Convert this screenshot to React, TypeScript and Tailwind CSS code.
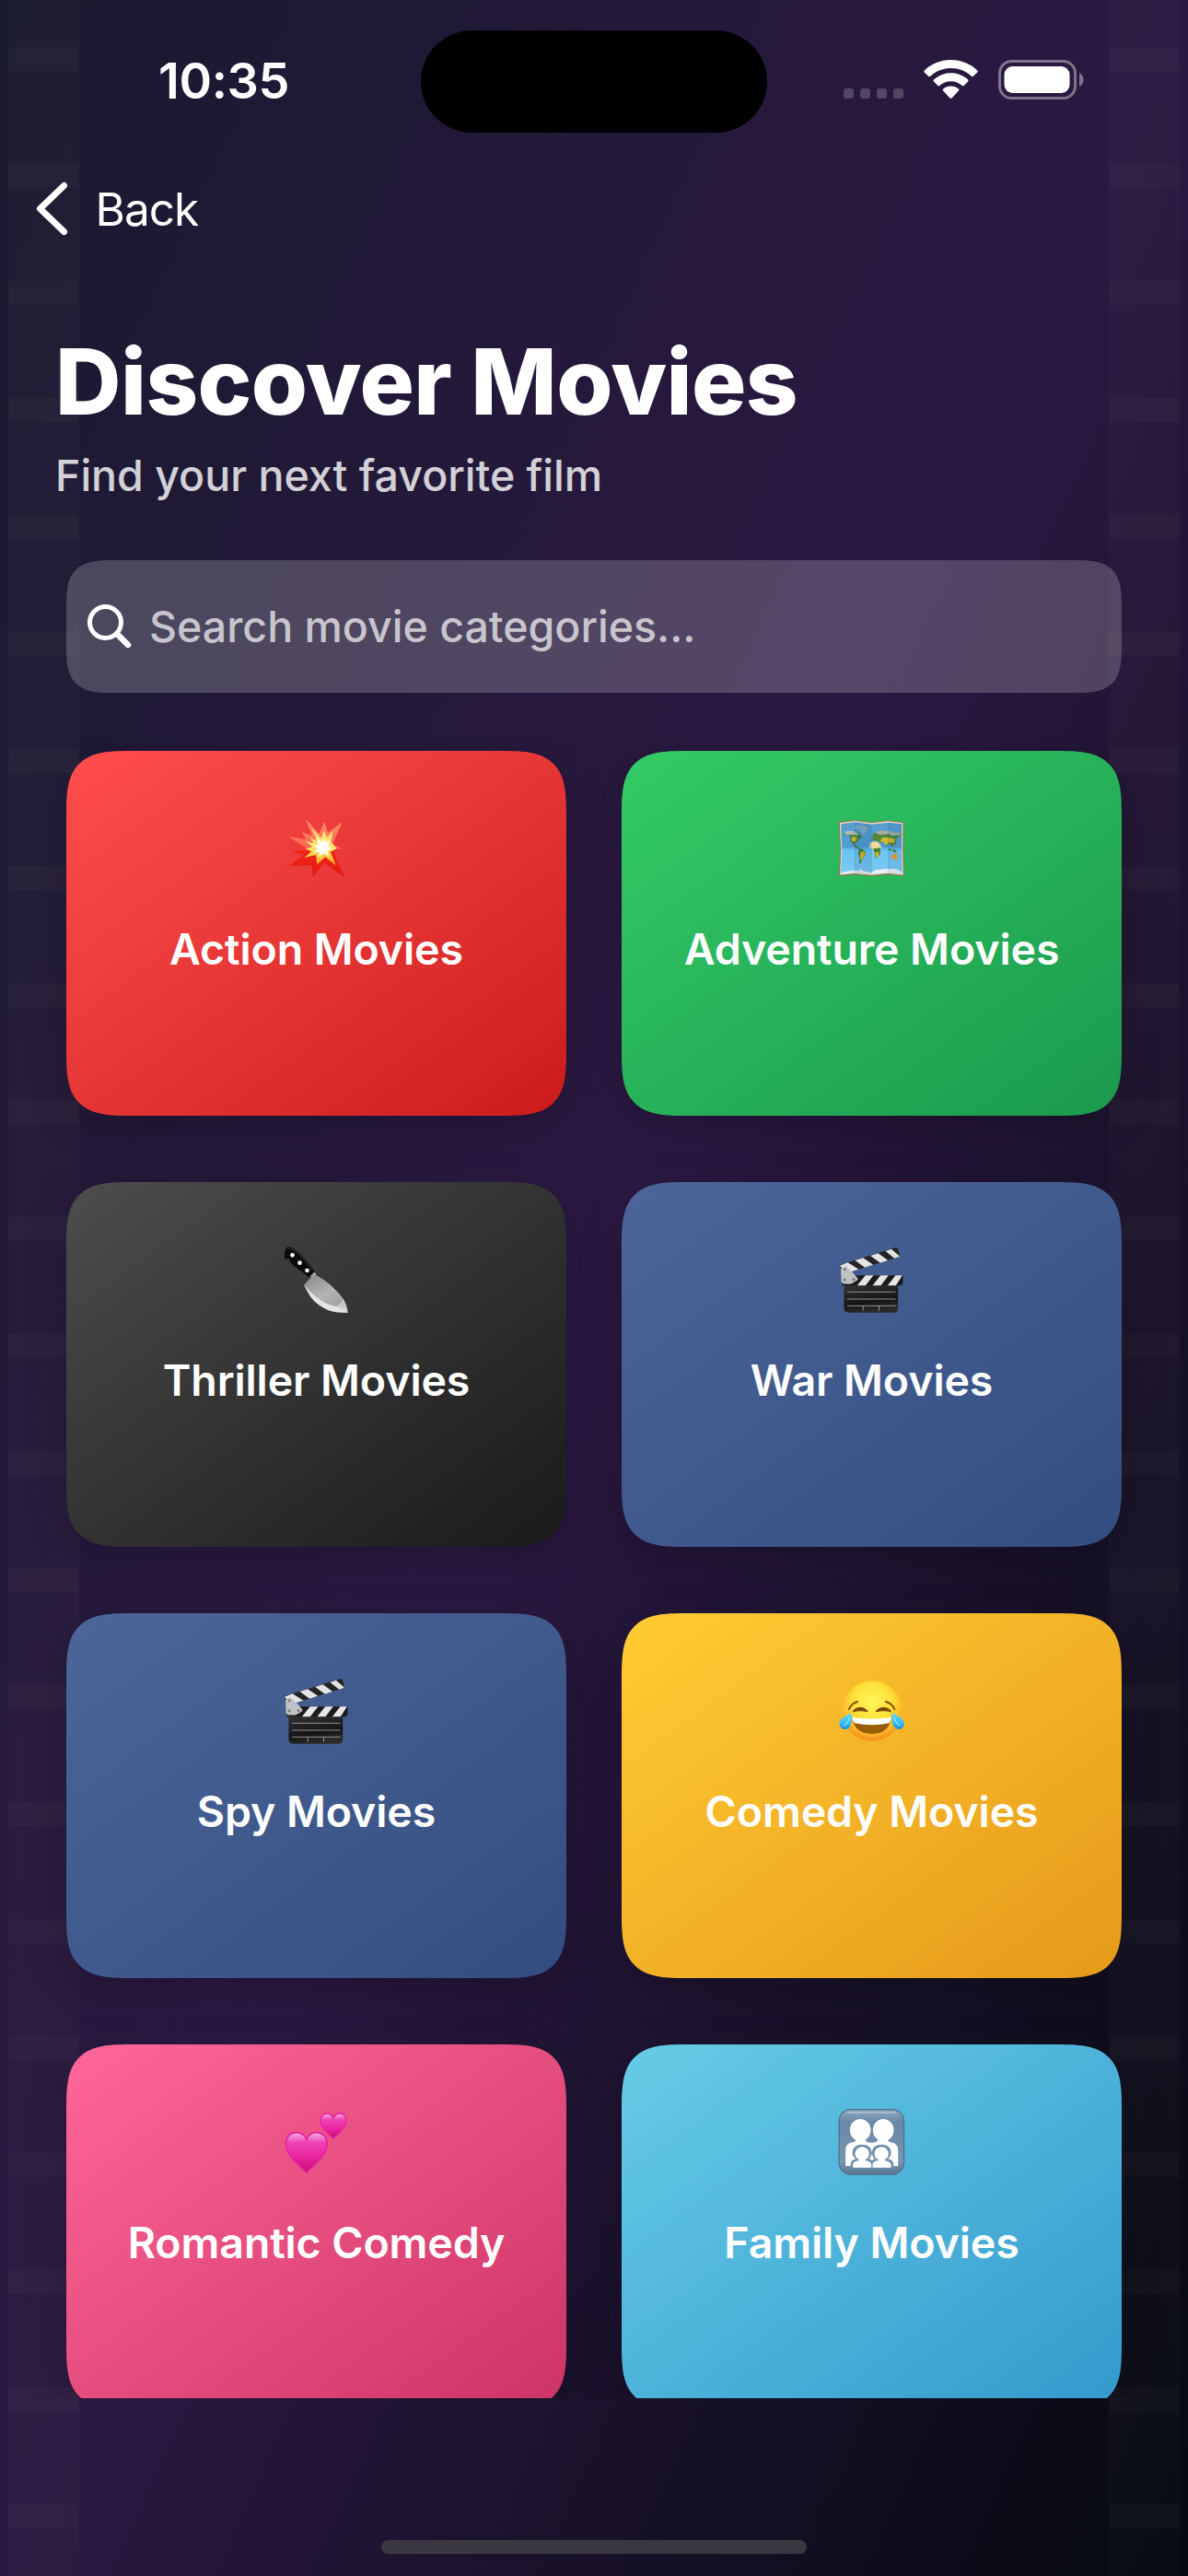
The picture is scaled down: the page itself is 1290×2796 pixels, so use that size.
import React from 'react';

function Burst() {
  return (
    <svg width="90" height="90" viewBox="25.5 21 270 270">
      <defs>
        <linearGradient id="burst" x1="0" y1="0" x2="0" y2="1">
          <stop offset="0" stopColor="#ff8f6b" />
          <stop offset="0.48" stopColor="#fb6650" />
          <stop offset="0.55" stopColor="#f02318" />
          <stop offset="1" stopColor="#e31b12" />
        </linearGradient>
        <linearGradient id="burstGold" x1="0" y1="0" x2="0" y2="1">
          <stop offset="0" stopColor="#ffd873" />
          <stop offset="0.5" stopColor="#ffe873" />
          <stop offset="1" stopColor="#f7a90f" />
        </linearGradient>
        <radialGradient id="burstCore">
          <stop offset="0.3" stopColor="#fff" />
          <stop offset="1" stopColor="#fff9c4" />
        </radialGradient>
      </defs>
      <path d="M124 57L168 104L185 65L197 101L243 67L218 125L213 141L250 154L218 163L222 184L253 248L184 199L148 247L143 207L71 210L119 173L82 166L125 151L68 114L125 124L112 100L146 112Z" fill="url(#burst)" />
      <path d="M144 86L175 119L184 94L193 117L213 95L207 133L226 153L205 164L223 208L188 181L161 205L158 174L119 183L143 163L124 154L146 148L123 128L149 136L140 116L161 128Z" fill="url(#burstGold)" />
      <path d="M158 115L177 132L184 118L190 133L205 122L198 145L212 154L195 161L202 181L183 169L169 181L167 165L148 164L163 154L151 140L166 142Z" fill="url(#burstCore)" />
    </svg>
  );
}

function WorldMap() {
  return (
    <svg width="90" height="90" viewBox="4.5 -9 270 270">
      <defs>
        <linearGradient id="sea" x1="0" y1="0" x2="0" y2="1">
          <stop offset="0" stopColor="#5b9fd0" />
          <stop offset="0.48" stopColor="#4f9dd6" />
          <stop offset="0.52" stopColor="#6cc5f5" />
          <stop offset="1" stopColor="#7cc8f2" />
        </linearGradient>
      </defs>
      <path d="M31 36L83 30L137 37L192 31L243 37V126L244 213L192 208L137 213L82 208L31 213L35 126Z" fill="#8d7350" />
      <path d="M34 39L83 33L137 40L192 34L240 40L239 126L241 209L192 204L137 209L82 204L35 209L38 126Z" fill="#e9dfc3" />
      <path d="M38 43L83 37L137 44L192 38L236 43V126L238 206L192 201L137 206L82 201L38 206L41 126Z" fill="url(#sea)" />
      <path d="M38 206L40 200L60 197L82 194L98 196L103 186L107 195L137 201L150 193L190 189L220 190L237 199L238 206L192 201L137 206L82 201Z" fill="#e9f1f7" />
      <path d="M47 73L58 68L72 72L86 66L101 77L108 88L98 91L89 103L82 108L92 117L101 123L96 125L80 115L69 98L68 82L50 79Z" fill="#487f36" />
      <path d="M72 88L86 83L90 92L84 101L75 99Z" fill="#d6b62c" />
      <path d="M48 70L57 65L82 67L95 75L91 80L74 78L55 79Z" fill="#aebcbd" />
      <path d="M82 52L98 47L120 50L125 57L119 68L112 79L105 73L99 61L91 57L82 60Z" fill="#88acca" />
      <path d="M97 124L106 123L119 135L117 145L108 156L102 172L97 170L99 153L94 139Z" fill="#388138" />
      <path d="M103 132L118 136L115 146L107 156L102 164L100 146Z" fill="#e8b51d" />
      <path d="M133 104L143 100L159 102L170 117L166 127L166 139L158 152L149 154L145 139L142 126L131 120Z" fill="#f0dda0" />
      <path d="M143 123L166 121L167 131L164 143L155 153L149 153L147 137Z" fill="#4a8430" />
      <path d="M151 136L161 134L158 150L151 151Z" fill="#e2bd2c" />
      <path d="M137 83L148 71L160 70L172 65L197 67L211 72L237 74L226 87L220 91L218 106L211 111L204 119L197 105L187 117L177 103L162 102L153 96L136 99L142 88Z" fill="#51883c" />
      <path d="M164 99L175 87L195 88L213 92L211 105L194 103L185 113L177 102Z" fill="#d7b72e" />
      <path d="M149 70L169 64L197 66L212 71L235 72L229 79L203 81L194 75L172 78L160 77Z" fill="#a5aea6" />
      <path d="M192 122L202 126L200 132L193 128ZM204 123L217 130L220 137L208 132Z" fill="#427b38" />
      <path d="M203 147L211 140L219 139L223 154L217 160L204 157Z" fill="#f29a2c" />
      <path d="M83 37L137 44V206L82 201Z" fill="#124877" opacity="0.13" />
      <path d="M192 38L236 43L238 206L192 201Z" fill="#124877" opacity="0.1" />
      <path d="M41 125H236M83 37V201M137 44V206M192 38V201" stroke="#24587d" strokeWidth="1" opacity="0.45" />
    </svg>
  );
}

function Knife() {
  return (
    <svg width="90" height="90" viewBox="-4.5 0 270 270">
      <defs>
        <linearGradient id="blade" x1="0.2" y1="0" x2="0.8" y2="1">
          <stop offset="0" stopColor="#8d8d8d" />
          <stop offset="0.5" stopColor="#b5b5b5" />
          <stop offset="1" stopColor="#969696" />
        </linearGradient>
      </defs>
      <path d="M109 121L121 108L128 114L118 128Z" fill="#d9dde0" />
      <path d="M105 127L121 110" stroke="#3d628f" strokeWidth="3" />
      <path d="M33 26C46 21 58 31 73 45C91 61 107 83 124 104L104 125C93 115 79 105 64 94C49 83 42 75 38 64L27 67C23 57 23 37 33 26Z" fill="#0b0b0b" stroke="#4d4d4d" strokeWidth="1" />
      <path d="M36 32C49 26 62 41 76 54C91 69 103 84 116 102" stroke="#383838" strokeWidth="3" fill="none" />
      <circle cx="51" cy="52" r="7" fill="#fff" />
      <circle cx="75" cy="77" r="7" fill="#fff" />
      <circle cx="99" cy="102" r="7" fill="#fff" />
      <path d="M89 149L120 115C150 125 188 158 211 187C224 205 230 221 231 239C190 241 159 232 132 210C111 193 99 169 89 149Z" fill="url(#blade)" />
      <path d="M89 149C113 177 139 199 166 211C187 219 211 222 229 226L231 239C190 241 159 232 132 210C111 193 99 169 89 149Z" fill="#e4e4e4" />
      <path d="M215 192C224 205 230 221 231 239L190 219C203 216 211 206 215 192Z" fill="#d2d2d2" opacity="0.8" />
    </svg>
  );
}

function Clapper() {
  return (
    <svg width="90" height="90" viewBox="4.5 0 270 270">
      <defs>
        <linearGradient id="slate" x1="0" y1="0" x2="0.3" y2="1">
          <stop offset="0" stopColor="#333" />
          <stop offset="0.7" stopColor="#141414" />
          <stop offset="1" stopColor="#2a2a2a" />
        </linearGradient>
      </defs>
      <path d="M48 150H224V226Q224 239 210 239H63Q48 239 48 226Z" fill="url(#slate)" />
      <path d="M58 172H216M58 195H216M58 217H216M110 217V233M162 217V233" stroke="#a9a9a9" strokeWidth="2.5" />
      <path d="M34 84L214 28Q221 26 224 33L231 56L62 109L40 106Z" fill="#242424" />
      <path d="M34 86L60 76L96 98L62 109L44 96ZM84 69L110 61L143 83L116 92ZM134 54L159 46L191 69L166 77ZM183 39L202 32L230 56L212 62Z" fill="#e4e4e4" />
      <path d="M38 118H240V143L234 151H42Z" fill="#1b1b1b" />
      <path d="M118 118H144L118 151H91ZM167 118H193L168 151H141ZM216 118H238L217 151H190Z" fill="#e6e6e6" />
      <path d="M39 96L50 88Q57 87 61 93L91 127Q94 132 89 134L72 144Q69 146 44 144L40 137Z" fill="#bfc2c4" stroke="#e1e1e1" strokeWidth="1.5" />
      <circle cx="50" cy="98" r="4.5" fill="#777" />
      <circle cx="50" cy="132" r="4.5" fill="#777" />
      <circle cx="80" cy="131" r="4.5" fill="#777" />
    </svg>
  );
}

function JoyFace() {
  return (
    <svg width="90" height="90" viewBox="4.5 -6 270 270">
      <defs>
        <radialGradient id="face" cx="0.5" cy="0.36" r="0.64">
          <stop offset="0" stopColor="#fff75a" />
          <stop offset="0.5" stopColor="#ffe138" />
          <stop offset="0.8" stopColor="#fdb92a" />
          <stop offset="1" stopColor="#ee8b1c" />
        </radialGradient>
        <linearGradient id="tear" x1="0" y1="0" x2="0" y2="1">
          <stop offset="0" stopColor="#63d8fb" />
          <stop offset="0.6" stopColor="#36bdf3" />
          <stop offset="1" stopColor="#178fdc" />
        </linearGradient>
      </defs>
      <circle cx="139" cy="126" r="98" fill="url(#face)" />
      <path d="M64 121C69 109 78 100 92 96" stroke="#8b5009" strokeWidth="6" strokeLinecap="round" fill="none" />
      <path d="M213 121C208 109 198 100 184 96" stroke="#8b5009" strokeWidth="6" strokeLinecap="round" fill="none" />
      <path d="M78 128C88 112 113 112 124 128C109 124 93 124 78 128ZM153 128C164 112 190 112 200 128C184 124 169 124 153 128Z" fill="#7b480a" stroke="#7b480a" strokeWidth="4" strokeLinejoin="round" />
      <path d="M75 148Q139 160 200 148C199 181 177 201 139 201C100 201 78 181 75 148Z" fill="#9a5c06" />
      <path d="M75 146Q139 158 201 146Q201 158 195 166Q139 178 82 166Q75 158 75 146Z" fill="#fff" />
      <path d="M70 133C77 151 74 174 62 182C49 192 33 182 33 167C33 151 54 143 70 133Z" fill="url(#tear)" />
      <path d="M206 133C200 151 204 174 216 182C229 192 244 182 244 167C244 151 223 143 206 133Z" fill="url(#tear)" />
      <path d="M48 173C56 169 63 161 65 150M229 173C221 169 214 161 212 150" stroke="#9aeeff" strokeWidth="5" strokeLinecap="round" fill="none" opacity="0.7" />
    </svg>
  );
}

function Hearts() {
  return (
    <svg width="90" height="90" viewBox="10.5 3 270 270">
      <defs>
        <linearGradient id="heart" x1="0" y1="0" x2="0" y2="1">
          <stop offset="0" stopColor="#f4b4df" />
          <stop offset="0.25" stopColor="#ee43b5" />
          <stop offset="0.6" stopColor="#ea269f" />
          <stop offset="1" stopColor="#c70d70" />
        </linearGradient>
      </defs>
      <path d="M112 234C91 213 45 177 45 140C45 117 60 104 79 104C97 104 107 114 112 127C117 114 127 104 145 104C164 104 179 117 179 140C179 177 133 213 112 234Z" fill="url(#heart)" stroke="#e51fa6" strokeWidth="5" />
      <path d="M199 123C186 110 157 90 157 66C157 50 167 42 178 42C189 42 196 48 199 57C202 48 209 42 220 42C232 42 241 50 241 66C241 90 212 110 199 123Z" fill="url(#heart)" stroke="#e51fa6" strokeWidth="4" />
    </svg>
  );
}

function Family() {
  return (
    <svg width="90" height="90" viewBox="4.5 3 270 270">
      <defs>
        <linearGradient id="tile" x1="0" y1="0" x2="0" y2="1">
          <stop offset="0" stopColor="#90a9bf" />
          <stop offset="0.2" stopColor="#6788a7" />
          <stop offset="0.8" stopColor="#7796b2" />
          <stop offset="1" stopColor="#5b7895" />
        </linearGradient>
      </defs>
      <rect x="32" y="29" width="211" height="211" rx="38" fill="url(#tile)" stroke="#526f8b" strokeWidth="4" />
      <path d="M60 39H215" stroke="#c2d1dd" strokeWidth="6" strokeLinecap="round" fill="none" opacity="0.5" />
      <g fill="#fff">
        <ellipse cx="101" cy="96" rx="34" ry="36" />
        <ellipse cx="176" cy="96" rx="34" ry="36" />
        <path d="M53 213V161C53 143 64 136 83 134L89 125H115L122 134Q132 137 138 137Q144 137 154 134L161 125H188L195 134C214 137 224 144 224 161V213Z" />
      </g>
      <path d="M72 220V205C73 194 83 194 90 191C69 174 76 146 107 146C137 146 144 174 125 190Q134 193 139 198Q144 193 152 190C133 174 140 146 170 146C201 146 207 174 187 191C197 194 206 195 207 207V220" fill="#7291ad" stroke="#7291ad" strokeWidth="5" />
      <g fill="#fff">
        <ellipse cx="107" cy="173" rx="23" ry="22" />
        <ellipse cx="170" cy="173" rx="23" ry="22" />
        <path d="M77 218V209C77 199 86 198 97 194V187H117V194C129 197 137 201 137 209V218ZM141 218V209C141 200 149 197 160 194V187H180V194C192 198 201 200 201 209V218Z" />
      </g>
    </svg>
  );
}

const categories = [
  { name: 'Action Movies', icon: <Burst />, bg: 'from-[#ff4d4d] to-[#cc1a1a]' },
  { name: 'Adventure Movies', icon: <WorldMap />, bg: 'from-[#33cc66] to-[#1a994d]' },
  { name: 'Thriller Movies', icon: <Knife />, bg: 'from-[#4d4d4d] to-[#1a1a1a]' },
  { name: 'War Movies', icon: <Clapper />, bg: 'from-[#4d6699] to-[#334d80]' },
  { name: 'Spy Movies', icon: <Clapper />, bg: 'from-[#4d6699] to-[#334d80]' },
  { name: 'Comedy Movies', icon: <JoyFace />, bg: 'from-[#ffcc33] to-[#e69919]' },
  { name: 'Romantic Comedy', icon: <Hearts />, bg: 'from-[#ff6699] to-[#cc3366]' },
  { name: 'Family Movies', icon: <Family />, bg: 'from-[#66cce6] to-[#3399cc]' },
];

function FilmStrip() {
  return (
    <div className="w-[77px] h-full pt-[51px] flex flex-col gap-[101.5px] overflow-hidden bg-[#ffffc8]/[0.02]">
      {Array.from({ length: 22 }, (_, i) => (
        <div key={i} className="h-[25.5px] shrink-0 bg-[#ffffc8]/[0.025]" />
      ))}
    </div>
  );
}

function StatusBar() {
  return (
    <div className="h-[177px] pt-[33px] flex items-start">
      <div className="w-[457px] pl-[172px] pt-[25px] text-[54px] leading-[60px] font-semibold tracking-[-0.4px]">10:35</div>
      <div className="w-[376px] h-[111px] rounded-full bg-black" />
      <div className="pl-[83px] pt-[32px] flex items-start">
        <div className="flex gap-[7px] pt-[31px]">
          {[0, 1, 2, 3].map((i) => (
            <div key={i} className="w-[11px] h-[11px] rounded-[3px] bg-white/20" />
          ))}
        </div>
        <svg className="ml-[22px]" width="59" height="43" viewBox="0 0 59 43" fill="#fff">
          <path d="M29.5 0C40.6 0 50.7 4.3 58.2 11.4C58.8 12 58.8 12.8 58.2 13.4L53.9 17.7C53.3 18.3 52.5 18.3 51.9 17.7C46 12.2 38.2 8.9 29.5 8.9C20.8 8.9 13 12.2 7.1 17.7C6.5 18.3 5.7 18.3 5.1 17.7L0.8 13.4C0.2 12.8 0.2 12 0.8 11.4C8.3 4.3 18.4 0 29.5 0Z" />
          <path d="M29.5 14.3C36.7 14.3 43.2 17 48.1 21.5C48.7 22.1 48.7 22.9 48.1 23.5L43.7 27.9C43.1 28.5 42.4 28.5 41.8 27.9C38.5 25 34.2 23.2 29.5 23.2C24.8 23.2 20.5 25 17.2 27.9C16.6 28.5 15.9 28.5 15.3 27.9L10.9 23.5C10.3 22.9 10.3 22.1 10.9 21.5C15.8 17 22.3 14.3 29.5 14.3Z" />
          <path d="M29.5 28.5C32.7 28.5 35.6 29.6 37.9 31.6C38.5 32.2 38.5 33 37.9 33.6L30.5 41.4C29.9 42 29.1 42 28.5 41.4L21.1 33.6C20.5 33 20.5 32.2 21.1 31.6C23.4 29.6 26.3 28.5 29.5 28.5Z" />
        </svg>
        <svg className="ml-[22px]" width="94" height="43" viewBox="0 0 94 43">
          <rect x="1.5" y="1.5" width="82" height="40" rx="13" fill="none" stroke="#fff" strokeOpacity="0.4" strokeWidth="3" />
          <rect x="6.5" y="7" width="71" height="29" rx="9" fill="#fff" />
          <path d="M88 14C94 17 94 26 88 29Z" fill="#fff" fillOpacity="0.4" />
        </svg>
      </div>
    </div>
  );
}

export default function App() {
  return (
    <div className="relative w-[1290px] h-[2796px] overflow-hidden text-white font-[Inter,'Noto_Sans',sans-serif] bg-linear-to-br from-[#19192f] via-[#2b1842] to-[#060911]">
      <div className="absolute inset-0 flex justify-between px-[9px]">
        <FilmStrip />
        <FilmStrip />
      </div>

      <div className="relative h-full flex flex-col">
        <StatusBar />

        <button className="mt-[20px] h-[60px] pl-[36px] flex items-center text-[49.5px] leading-[60px]">
          <svg width="40" height="60" viewBox="0 0 40 60" fill="none" stroke="#fff" strokeWidth="7" strokeLinecap="round" strokeLinejoin="round">
            <path d="M33.5 4.5L7.5 29.5L33.5 54.5" />
          </svg>
          <span className="ml-[27.5px] tracking-[-1px]">Back</span>
        </button>

        <h1 className="mt-[97px] pl-[60px] text-[99px] leading-[120px] font-extrabold tracking-[-0.6px]">Discover Movies</h1>
        <p className="mt-[13px] pl-[60px] text-[46.5px] leading-[58px] font-[450] text-white/80">Find your next favorite film</p>

        <div className="mt-[63px] mx-[72px] h-[144px] shrink-0 rounded-[36px] supports-[corner-shape:squircle]:rounded-[54px] [corner-shape:superellipse(1.7)] bg-white/20 flex items-center pl-[22px]">
          <svg width="50" height="50" viewBox="0 0 50 50" fill="none" stroke="#fff" strokeWidth="5" strokeLinecap="round">
            <circle cx="20.5" cy="20.5" r="17" />
            <path d="M33 33L45 45" strokeWidth="6.5" />
          </svg>
          <span className="ml-[18px] text-[46.5px] leading-[58px] font-[450] text-white/70">Search movie categories...</span>
        </div>

        <div className="mt-[51px] h-[1800px] shrink-0 overflow-hidden px-[72px] pt-[12px]">
          <div className="grid grid-cols-2 gap-x-[60px] gap-y-[72px]">
            {categories.map((c) => (
              <div
                key={c.name}
                className={`h-[396px] pt-[62px] flex flex-col items-center bg-linear-to-br rounded-[48px] supports-[corner-shape:squircle]:rounded-[73px] [corner-shape:superellipse(1.7)] shadow-[0_12px_48px_rgba(0,0,0,0.2)] ${c.bg}`}
              >
                {c.icon}
                <span className="mt-[34px] text-[46.5px] leading-[58px] font-semibold tracking-[-0.1px]">{c.name}</span>
              </div>
            ))}
          </div>
        </div>

        <div className="mt-[154px] h-[15px] w-[462px] shrink-0 self-center rounded-full bg-[#3a3840]" />
      </div>
    </div>
  );
}
